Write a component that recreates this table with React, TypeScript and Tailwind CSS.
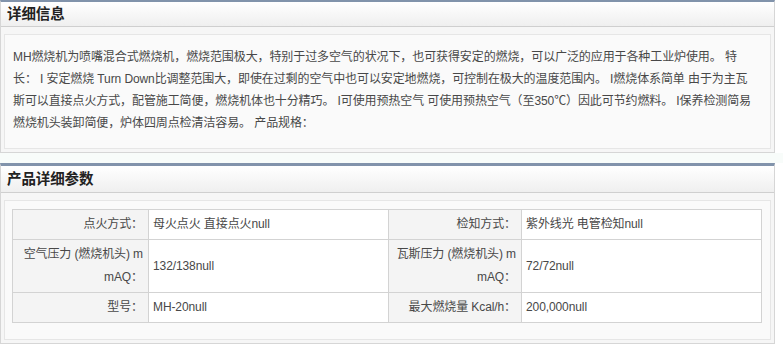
const rows = [
  [
    { label: "点火方式：", value: "母火点火 直接点火null" },
    { label: "检知方式：", value: "紫外线光 电管检知null" },
  ],
  [
    { label: "空气压力 (燃烧机头) mmAQ：", value: "132/138null" },
    { label: "瓦斯压力 (燃烧机头) mmAQ：", value: "72/72null" },
  ],
  [
    { label: "型号：", value: "MH-20null" },
    { label: "最大燃烧量 Kcal/h：", value: "200,000null" },
  ],
];

const intro =
  "MH燃烧机为喷嘴混合式燃烧机，燃烧范围极大，特别于过多空气的状况下，也可获得安定的燃烧，可以广泛的应用于各种工业炉使用。 特长： I 安定燃烧 Turn Down比调整范围大，即使在过剩的空气中也可以安定地燃烧，可控制在极大的温度范围内。 I燃烧体系简单 由于为主瓦斯可以直接点火方式，配管施工简便，燃烧机体也十分精巧。 I可使用预热空气 可使用预热空气（至350℃）因此可节约燃料。 I保养检测简易燃烧机头装卸简便，炉体四周点检清洁容易。 产品规格：";

function Panel({
  title,
  top,
  head,
  children,
}: {
  title: string;
  top: string;
  head: string;
  children: React.ReactNode;
}) {
  return (
    <div className={`w-[775px] border border-[#d6d6d6] ${top} border-t-[#8193ab] bg-[#f6f6f6]`}>
      <div className={`${head} flex items-center pl-[6px] border-b border-[#cfcfcf] bg-gradient-to-b from-white to-[#efefef]`}>
        <h2 className="text-[14.5px] font-bold text-[#222] leading-none">{title}</h2>
      </div>
      <div className="p-[3px] pt-[7px]">
        <div className="border border-[#e6e6e6] bg-[#fafafa]">{children}</div>
      </div>
    </div>
  );
}

export default function App() {
  return (
    <div
      className="w-[783px] h-[352px] bg-white overflow-hidden text-[12px] tracking-[-0.1px] text-[#484848]"
      style={{ fontFamily: '"Liberation Sans", "Noto Sans CJK SC", sans-serif' }}
    >
      <Panel title="详细信息" top="border-t-2" head="h-[25px]">
        <p className="pl-[8px] pr-[14px] pt-[11px] pb-[14px] leading-[22px]">{intro}</p>
      </Panel>

      <div className="h-[10px] bg-[#f8fcfa]" />

      <Panel title="产品详细参数" top="border-t-[3px]" head="h-[27px]">
        <div className="pl-[7px] pr-[10px] pt-[8px] pb-[16px]">
          <table className="w-[749px] border-collapse table-fixed">
            <colgroup>
              <col className="w-[136px]" />
              <col className="w-[240px]" />
              <col className="w-[133px]" />
              <col className="w-[240px]" />
            </colgroup>
            <tbody>
              {rows.map((row, i) => (
                <tr key={i}>
                  {row.flatMap((c) => [
                    <td
                      key={c.label}
                      className="border border-[#d3d3d3] bg-[#f4f4f4] text-right break-all pr-[5px] pl-[4px] py-[3px] leading-[23px]"
                    >
                      {c.label}
                    </td>,
                    <td
                      key={c.value}
                      className="border border-[#d3d3d3] bg-white pl-[4px] py-[3px] leading-[23px]"
                    >
                      {c.value}
                    </td>,
                  ])}
                </tr>
              ))}
            </tbody>
          </table>
        </div>
      </Panel>
    </div>
  );
}
